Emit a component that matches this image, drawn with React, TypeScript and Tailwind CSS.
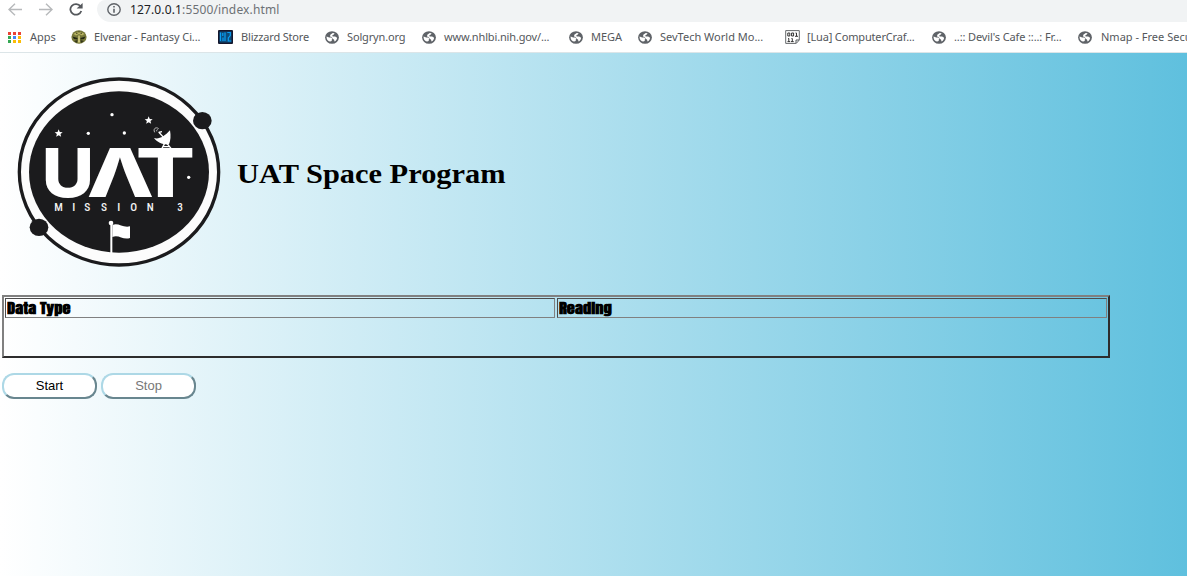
import type { ReactNode } from "react";

function Globe() {
  return (
    <svg viewBox="0 0 14 13" className="h-[13px] w-[14px]">
      <ellipse cx="7" cy="6.500" rx="6.900" ry="6.300" fill="#5f6368" />
      <path d="M1.600 5.400 4.200 6.400l2.300.2.900 1.400-.9.900.5.900c-1.400.9-3 .8-4.100-.4C1.900 8.400 1.500 7 1.600 5.400Z" fill="#fff" />
      <path d="M5.300 3.800 7.700 2l1.900.2-.8 1.300-1.600 1 .5.900 2.500.2 1.900 1.100c-.1 1.900-1.100 3.100-2.600 3.700l-.4-1.700-1.600-1.300-.8-1.300-1.700-.7Z" fill="#fff" />
    </svg>
  );
}

function Elvenar() {
  return (
    <svg viewBox="0 0 16 14" className="h-[14px] w-[16px]">
      <ellipse cx="8" cy="7" rx="7.600" ry="6.700" fill="#77783a" />
      <path d="M2.500 4C5 1.500 11 1.500 13.500 4L11 5.500 8 4 5 5.500Z" fill="#b8b362" />
      <path d="M5 3.300h1.500M9.500 3.300H11M7.500 1.800h1" stroke="#414122" />
      <path d="M1.500 6.500 6.500 8v1.500L3 9ZM14.500 6.500 9.500 8v1.500L13 9Z" fill="#242713" />
      <path d="M3 11l3.500-1L6 13ZM13 11l-3.500-1 .5 3Z" fill="#34371a" />
      <path d="M7.300 5.500h1.400l.3 7H7Z" fill="#d2cc80" />
    </svg>
  );
}

function Blizzard() {
  return (
    <svg viewBox="0 0 15 14" className="h-[14px] w-[15px]">
      <rect width="15" height="14" rx="1" fill="#15172c" />
      <rect x="1.500" y="1.500" width="12" height="11" fill="#0878bd" opacity=".55" />
      <path d="M2.500 2.500v8.500M4.800 3v3M5 7.500V11M7 2.500V11M9.300 2.500h3v3l-2 2.500v3h3" stroke="#0aa0f5" strokeWidth="1.200" fill="none" />
    </svg>
  );
}

function Lua() {
  return (
    <svg viewBox="0 0 15 14" className="h-[14px] w-[15px]">
      <path d="M.7.600h13.600V10l-3 3.400H.7Z" fill="#fff" stroke="#66696c" />
      <path d="M11 13v-3h3" fill="none" stroke="#55585b" />
      <path d="M2.800 3h2v3h-2ZM6.600 3h2v3h-2ZM10.500 3h1v3M10 6.300h3M3 8.500h.8v3M2.500 11.600h2.700M6.500 8.500h.8v3M6 11.600h2.700" fill="none" stroke="#333" />
    </svg>
  );
}

const appDots = ["#ea4335", "#ea4335", "#ea4335", "#34a853", "#4285f4", "#fbbc05", "#34a853", "#fbbc05", "#fbbc05"];

function Apps() {
  return (
    <svg viewBox="0 0 13 11" className="h-[11px] w-[13px]">
      {appDots.map((c, i) => (
        <rect key={i} x={(i % 3) * 5} y={Math.floor(i / 3) * 4} width="3" height="3" fill={c} />
      ))}
    </svg>
  );
}

const bookmarks: { icon: ReactNode; label: string; box: string; gap: string; text: string }[] = [
  { icon: <Apps />, label: "Apps", box: "w-[63px]", gap: "w-[22px]", text: "" },
  { icon: <Elvenar />, label: "Elvenar - Fantasy Ci...", box: "w-[147px]", gap: "w-[23px]", text: "tracking-[-0.1px]" },
  { icon: <Blizzard />, label: "Blizzard Store", box: "w-[107px]", gap: "w-[23px]", text: "tracking-[-0.18px]" },
  { icon: <Globe />, label: "Solgryn.org", box: "w-[97px]", gap: "w-[22px]", text: "tracking-[-0.15px]" },
  { icon: <Globe />, label: "www.nhlbi.nih.gov/...", box: "w-[147px]", gap: "w-[22px]", text: "tracking-[-0.15px]" },
  { icon: <Globe />, label: "MEGA", box: "w-[69px]", gap: "w-[22px]", text: "" },
  { icon: <Globe />, label: "SevTech World Mo...", box: "w-[147px]", gap: "w-[22px]", text: "" },
  { icon: <Lua />, label: "[Lua] ComputerCraf...", box: "w-[147px]", gap: "w-[22px]", text: "tracking-[-0.16px]" },
  { icon: <Globe />, label: "..:: Devil's Cafe ::..: Fr...", box: "w-[146px]", gap: "w-[22px]", text: "tracking-[-0.12px]" },
  { icon: <Globe />, label: "Nmap - Free Security", box: "w-[150px]", gap: "w-[23px]", text: "" },
];

function Star({ x, y, r }: { x: number; y: number; r: number }) {
  return (
    <path
      transform={`translate(${x} ${y}) scale(${r})`}
      d="M0-1 .28-.34 1-.3.45.16.62.85 0 .46-.62.85-.45.16-1-.3-.28-.34Z"
      fill="#fff"
    />
  );
}

function Logo() {
  return (
    <svg viewBox="0 0 660 615" className="h-[205px] w-[220px] shrink-0">
      <ellipse cx="327" cy="306" rx="299" ry="279" fill="#fcfcfc" stroke="#1b1b1d" strokeWidth="10" />
      <ellipse cx="327" cy="306" rx="270" ry="242" fill="#1b1b1d" />
      <ellipse cx="577" cy="152" rx="28" ry="26" fill="#1b1b1d" />
      <ellipse cx="87" cy="472" rx="28" ry="26" fill="#1b1b1d" />
      <Star x={146} y={190} r={12} />
      <Star x={416} y={151} r={12} />
      <circle cx="306" cy="134" r="5" fill="#fff" />
      <circle cx="235" cy="190" r="5" fill="#fff" />
      <circle cx="343" cy="189" r="5" fill="#fff" />
      <circle cx="536" cy="322" r="5" fill="#fff" />
      <path d="M432 204c14 5 31-4 48-23 3 17 2 31-3 42-17 2-35-5-45-19Z" fill="#fff" />
      <path d="M446 186l20 22M446 187l10-2M465 218l-9 17M469 218l14 17M458 230h20" stroke="#fff" strokeWidth="4" fill="none" />
      <path d="M434 187c-6-12 5-17 12-11M440 184c-2-4 2-6 4-4" stroke="#bbb" strokeWidth="3" fill="none" />
      <g fill="#fff" fontFamily="Inter, sans-serif" fontWeight="800" fontSize="203">
        <text x="95" y="380" textLength="157" lengthAdjust="spacingAndGlyphs">U</text>
        <text x="230" y="380" textLength="202" lengthAdjust="spacingAndGlyphs">Λ</text>
        <text x="377" y="380" textLength="178" lengthAdjust="spacingAndGlyphs">T</text>
      </g>
      <text
        x="133 187 223 273 322 361 410 502"
        y="422"
        fill="#f2f2f2"
        fontFamily="'Roboto Condensed', Roboto, sans-serif"
        fontWeight="500"
        fontSize="34"
      >
        MISSION3
      </text>
      <path d="M304 458v92" stroke="#fff" strokeWidth="6" />
      <circle cx="303" cy="459" r="7" fill="#fff" />
      <path d="M307 465c18-8 30 9 53 4v35c-22 7-34-12-53-3Z" fill="#fff" />
    </svg>
  );
}

export default function App() {
  return (
    <div className="flex h-[576px] w-[1187px] flex-col overflow-hidden bg-white font-['Noto_Sans',sans-serif]">
      <header className="flex h-[53px] shrink-0 flex-col border-b border-[#dce5e8] bg-white">
        <div className="flex h-[22px] shrink-0">
          <div className="flex w-[97px] gap-[17px] pl-[8px] pt-[3px]">
            <svg viewBox="0 0 14 13" className="h-[13px] w-[14px]" fill="none" stroke="#b7b9bb" strokeWidth="1.400">
              <path d="M14 6.500H1M7 .8 1 6.500l6 5.700" />
            </svg>
            <svg viewBox="0 0 14 13" className="h-[13px] w-[14px]" fill="none" stroke="#b7b9bb" strokeWidth="1.400">
              <path d="M0 6.500h13M7 .8l6 5.700-6 5.700" />
            </svg>
            <svg viewBox="0 0 14 13" className="-ml-px h-[13px] w-[14px]" fill="none" stroke="#55585c" strokeWidth="1.800">
              <path d="M11.500 3.200A5.600 5.300 0 1 0 12.300 8" />
              <path d="M13.600 0v5.500H7.600Z" fill="#55585c" stroke="none" />
            </svg>
          </div>
          <div className="flex flex-1 items-start rounded-bl-[16px] rounded-tl-[10px] bg-[#f1f3f4] pl-[10px]">
            <svg viewBox="0 0 14 13" className="mt-[3px] h-[13px] w-[14px]" fill="none" stroke="#5f6368" strokeWidth="1.400">
              <ellipse cx="7" cy="6.500" rx="6.200" ry="5.800" />
              <path d="M7 5.700v4M7 3v1.400" strokeWidth="1.600" />
            </svg>
            <span className="ml-[9px] whitespace-nowrap text-[12px] leading-[19px] tracking-[0.14px] text-[#6d7175]">
              <span className="text-[#202124]">127.0.0.1</span>:5500/index.html
            </span>
          </div>
        </div>
        <nav className="flex h-[30px] pl-[8px]">
          {bookmarks.map((b, i) => (
            <div key={i} className={`flex shrink-0 items-center ${b.box}`}>
              <span className={`shrink-0 ${b.gap}`}>{b.icon}</span>
              <span className={`whitespace-nowrap text-[11px] leading-[14px] text-[#54575b] ${b.text}`}>{b.label}</span>
            </div>
          ))}
        </nav>
      </header>
      <main className="flex-1 bg-linear-[to_right,#ffffff,#5fc0de]">
        <div className="flex h-[242px] items-start pl-[10px] pt-[17px]">
          <Logo />
          <h1 className="ml-[7px] mt-[87px] origin-left scale-x-[1.086] whitespace-nowrap font-['Liberation_Serif',serif] text-[28px] font-bold leading-[34px] text-black">
            UAT Space Program
          </h1>
        </div>
        <div className="ml-[2px] h-[63px] w-[1108px] border-2 border-b-[#2d2d2d] border-l-[#808080] border-r-[#2d2d2d] border-t-[#808080] p-[1px]">
          <div className="flex gap-[2px] font-['Anton','Impact','Liberation_Sans',sans-serif] text-[14px] font-bold leading-[19px] text-black">
            <div className="h-[20px] flex-1 border border-b-[#808080] border-l-[#4d4d4d] border-r-[#808080] border-t-[#4d4d4d] pl-[1px]">
              <span className="inline-block origin-left scale-x-[1.18]">Data Type</span>
            </div>
            <div className="h-[20px] flex-1 border border-b-[#808080] border-l-[#4d4d4d] border-r-[#808080] border-t-[#4d4d4d] pl-[1px]">
              <span className="inline-block origin-left scale-x-[1.18]">Reading</span>
            </div>
          </div>
        </div>
        <div className="flex gap-[4px] pl-[2px] pt-[15px] font-['Liberation_Sans',sans-serif] text-[13px]">
          <button className="h-[26px] w-[95px] rounded-[12px] border-2 border-b-[#68868f] border-l-[#add8e6] border-r-[#68868f] border-t-[#add8e6] bg-white text-black">Start</button>
          <button className="h-[26px] w-[95px] rounded-[12px] border-2 border-b-[#68868f] border-l-[#add8e6] border-r-[#68868f] border-t-[#add8e6] bg-white text-[#777]" disabled>Stop</button>
        </div>
      </main>
    </div>
  );
}
